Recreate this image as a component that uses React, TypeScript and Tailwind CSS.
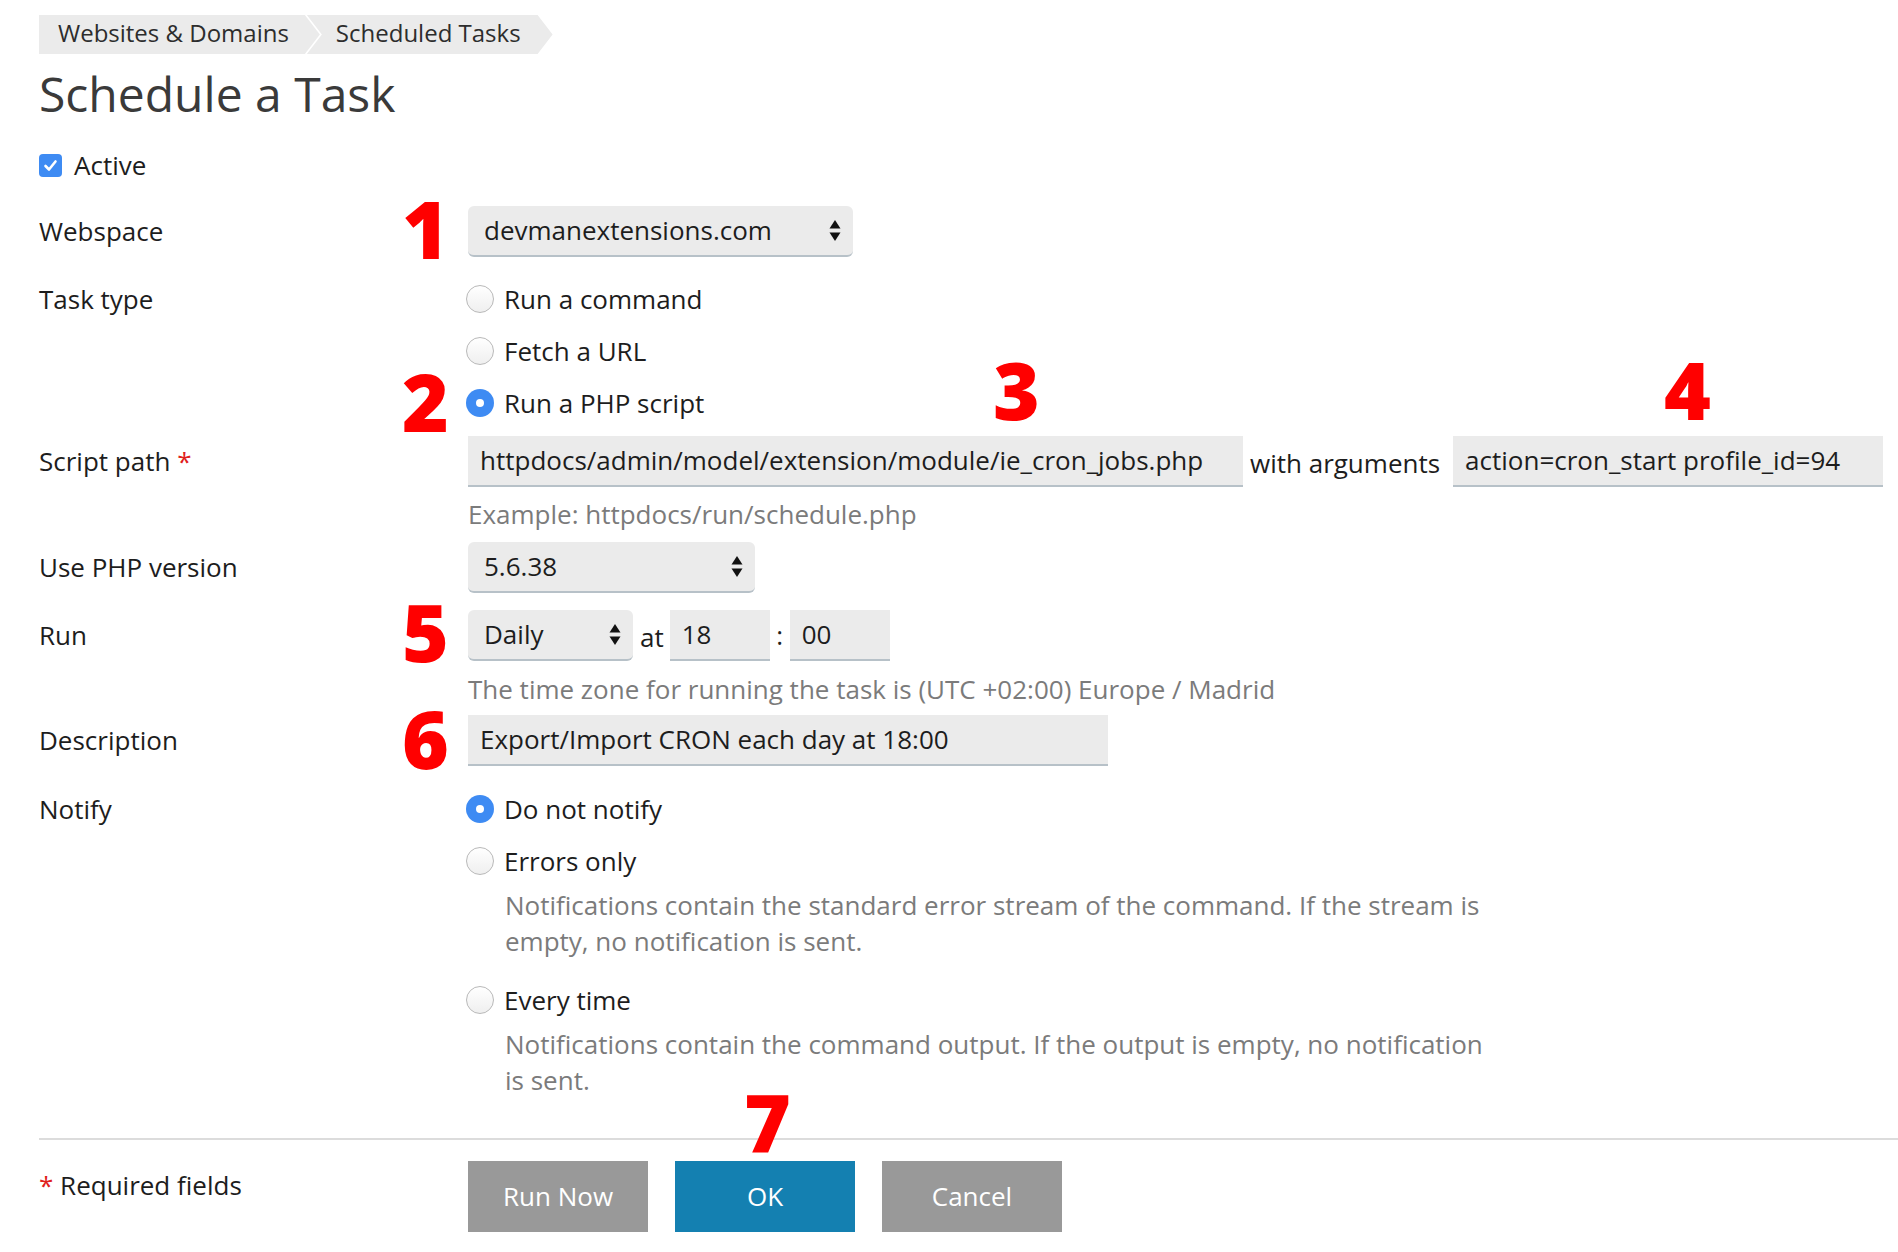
import React from "react";

const font = { fontFamily: '"Open Sans", "Liberation Sans", sans-serif' };

function Arrows() {
  return (
    <svg width="12" height="23" viewBox="0 0 12 23" className="shrink-0">
      <path d="M6 1 L11.5 9.5 L0.5 9.5 Z" fill="#111" />
      <path d="M6 22 L11.5 13.5 L0.5 13.5 Z" fill="#111" />
    </svg>
  );
}

function Select({ value, width }: { value: string; width: string }) {
  return (
    <div
      className={`${width} h-[51px] flex items-center justify-between pl-[16px] pr-[12px] rounded-[6px] bg-[#ebebeb] border-b-2 border-[#b7c1c8] text-[26px] text-[#1d1d1d]`}
    >
      <span>{value}</span>
      <Arrows />
    </div>
  );
}

function Input({ value, width }: { value: string; width: string }) {
  return (
    <div
      className={`${width} h-[51px] flex items-center px-[12px] bg-[#ebebeb] border-b-2 border-[#b7c1c8] text-[26px] text-[#1d1d1d] whitespace-nowrap`}
    >
      {value}
    </div>
  );
}

function Radio({ checked, label }: { checked?: boolean; label: string }) {
  return (
    <div className="h-[52px] flex items-center gap-[10px] -ml-[2px]">
      {checked ? (
        <span className="w-[28px] h-[28px] rounded-full bg-[#3e8bf3] flex items-center justify-center">
          <span className="w-[8px] h-[8px] rounded-full bg-white" />
        </span>
      ) : (
        <span className="w-[28px] h-[28px] rounded-full border border-[#b9b9b9] bg-gradient-to-b from-white to-[#efefef]" />
      )}
      <span className="text-[26px] text-[#1d1d1d]">{label}</span>
    </div>
  );
}

function Label({ children }: { children: React.ReactNode }) {
  return <div className="w-[429px] shrink-0 text-[26px] text-[#1d1d1d]">{children}</div>;
}

// red step numbers drawn over the form
function Num({ n, x, y, tight }: { n: string; x: number; y: number; tight?: boolean }) {
  return (
    <div
      className={`absolute text-[80px] font-extrabold text-[#ff0000] ${tight ? "leading-[40px]" : "leading-none"}`}
      style={{ left: x, top: y }}
    >
      {n}
    </div>
  );
}

export default function App() {
  return (
    <div className="relative w-[1898px] h-[1252px] bg-white overflow-hidden pl-[39px]" style={font}>
      {/* breadcrumbs */}
      <div className="pt-[15px] flex">
        <div
          className="h-[39px] flex items-center bg-[#ebebeb] pl-[19px] pr-[31px] pb-[3px] text-[24px] text-[#2d2d2d]"
          style={{ clipPath: "polygon(0 0, calc(100% - 15px) 0, 100% 50%, calc(100% - 15px) 100%, 0 100%)" }}
        >
          Websites &amp; Domains
        </div>
        <div
          className="-ml-[13px] h-[39px] flex items-center bg-[#ebebeb] pl-[29px] pr-[32px] pb-[3px] text-[24px] text-[#2d2d2d]"
          style={{
            clipPath:
              "polygon(0 0, calc(100% - 15px) 0, 100% 50%, calc(100% - 15px) 100%, 0 100%, 15px 50%)",
          }}
        >
          Scheduled Tasks
        </div>
      </div>

      {/* title */}
      <h1 className="mt-[11px] text-[48px] leading-[58px] text-[#3a3a3a]">Schedule a Task</h1>

      {/* active */}
      <div className="mt-[22px] h-[40px] flex items-center gap-[12px]">
        <span className="w-[23px] h-[23px] rounded-[4px] bg-[#3e8bf3] flex items-center justify-center">
          <svg width="15" height="15" viewBox="0 0 15 15">
            <path d="M2.5 8 L6 11.5 L12.5 3.5" stroke="white" strokeWidth="2.6" fill="none" strokeLinecap="round" strokeLinejoin="round" />
          </svg>
        </span>
        <span className="text-[26px] text-[#1d1d1d]">Active</span>
      </div>

      {/* webspace */}
      <div className="mt-[21px] flex items-center">
        <Label>Webspace</Label>
        <Select value="devmanextensions.com" width="w-[385px]" />
      </div>

      {/* task type */}
      <div className="mt-[16px] flex">
        <Label>
          <div className="h-[52px] flex items-center">Task type</div>
        </Label>
        <div className="flex flex-col">
          <Radio label="Run a command" />
          <Radio label="Fetch a URL" />
          <Radio checked label="Run a PHP script" />
        </div>
      </div>

      {/* script path */}
      <div className="mt-[7px] flex items-center">
        <Label>
          Script path <span className="text-[#e0201b]">*</span>
        </Label>
        <Input value="httpdocs/admin/model/extension/module/ie_cron_jobs.php" width="w-[775px]" />
        <span className="ml-[7px] mr-[13px] text-[26px] text-[#1d1d1d] mt-[4px]">with arguments</span>
        <Input value="action=cron_start profile_id=94" width="w-[430px]" />
      </div>
      <div className="mt-[9px] pl-[429px] h-[36px] flex items-center text-[26px] text-[#7b7b7b]">
        Example: httpdocs/run/schedule.php
      </div>

      {/* php version */}
      <div className="mt-[10px] flex items-center">
        <Label>Use PHP version</Label>
        <Select value="5.6.38" width="w-[287px]" />
      </div>

      {/* run */}
      <div className="mt-[17px] flex items-center">
        <Label>Run</Label>
        <Select value="Daily" width="w-[165px]" />
        <span className="ml-[7px] mr-[6px] text-[26px] text-[#1d1d1d] mt-[4px]">at</span>
        <Input value="18" width="w-[100px]" />
        <span className="w-[20px] text-center text-[26px] text-[#1d1d1d]">:</span>
        <Input value="00" width="w-[100px]" />
      </div>
      <div className="mt-[10px] pl-[429px] h-[36px] flex items-center text-[26px] text-[#7b7b7b]">
        The time zone for running the task is (UTC +02:00) Europe / Madrid
      </div>

      {/* description */}
      <div className="mt-[8px] flex items-center">
        <Label>Description</Label>
        <Input value="Export/Import CRON each day at 18:00" width="w-[640px]" />
      </div>

      {/* notify */}
      <div className="mt-[17px] flex">
        <Label>
          <div className="h-[52px] flex items-center">Notify</div>
        </Label>
        <div className="flex flex-col">
          <Radio checked label="Do not notify" />
          <Radio label="Errors only" />
          <p className="pl-[37px] w-[1025px] text-[26px] leading-[36px] text-[#7b7b7b]">
            Notifications contain the standard error stream of the command. If the stream is empty, no notification is sent.
          </p>
          <div className="mt-[15px]">
            <Radio label="Every time" />
          </div>
          <p className="pl-[37px] w-[1025px] h-[64px] text-[26px] leading-[36px] text-[#7b7b7b]">
            Notifications contain the command output. If the output is empty, no notification is sent.
          </p>
        </div>
      </div>

      {/* footer */}
      <div className="mt-[48px] border-t-2 border-[#dcdcdc]" />
      <div className="mt-[21px] flex items-start">
        <Label>
          <div className="mt-[5px]">
            <span className="text-[#e0201b]">*</span> Required fields
          </div>
        </Label>
        <div className="flex gap-[27px]">
          <button className="w-[180px] h-[71px] bg-[#999999] text-white text-[26px]">Run Now</button>
          <button className="w-[180px] h-[71px] bg-[#1480b1] text-white text-[26px]">OK</button>
          <button className="w-[180px] h-[71px] bg-[#999999] text-white text-[26px]">Cancel</button>
        </div>
      </div>

      {/* annotations */}
      <Num n="1" x={402} y={188} />
      <Num n="2" x={402} y={361} />
      <Num n="3" x={993} y={349} />
      <Num n="4" x={1664} y={349} />
      <Num n="5" x={402} y={591} />
      <Num n="6" x={402} y={698} />
      <Num n="7" x={744} y={1101} tight />
    </div>
  );
}
